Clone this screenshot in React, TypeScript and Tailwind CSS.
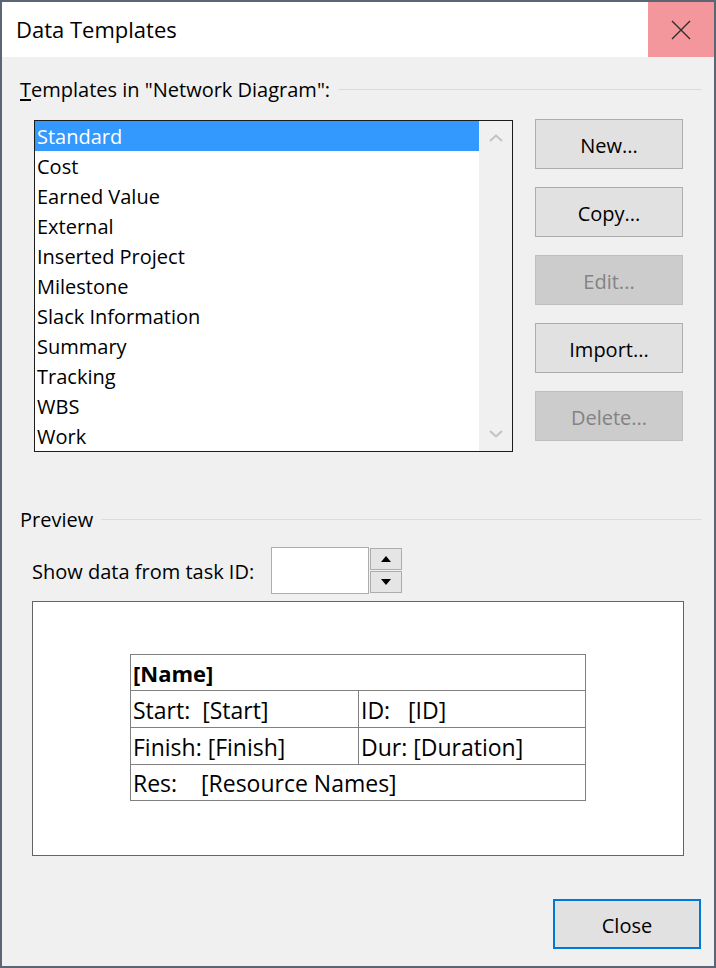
const templates = [
  "Standard",
  "Cost",
  "Earned Value",
  "External",
  "Inserted Project",
  "Milestone",
  "Slack Information",
  "Summary",
  "Tracking",
  "WBS",
  "Work",
];

const buttons = [
  { label: "New...", disabled: false },
  { label: "Copy...", disabled: false },
  { label: "Edit...", disabled: true },
  { label: "Import...", disabled: false },
  { label: "Delete...", disabled: true },
];

export default function App() {
  return (
    <div className="w-[716px] h-[968px] border-2 border-[#5b6573] bg-[#f0f0f0] flex flex-col font-['Open_Sans',sans-serif] text-[20px] text-black">
      {/* title bar */}
      <div className="h-[55px] bg-white flex shrink-0">
        <div className="flex-1 flex items-center pl-[14px] text-[22px]">Data Templates</div>
        <div className="w-[66px] bg-[#f4979c] flex items-center justify-center">
          <svg width="20" height="20" viewBox="0 0 20 20">
            <path d="M1 1 L19 19 M19 1 L1 19" stroke="#2b2b2b" strokeWidth="1.3" />
          </svg>
        </div>
      </div>

      <div className="flex-1 flex flex-col pl-[18px] pr-[12px]">
        <div className="mt-[19px] h-[26px] flex items-center">
          <span className="pt-[2px]">
            <span className="underline underline-offset-2">T</span>emplates in "Network Diagram":
          </span>
          <div className="flex-1 h-px bg-[#dcdcdc] ml-[8px]" />
        </div>

        <div className="flex items-start mt-[18px] ml-[14px]">
          <div className="w-[479px] h-[332px] border border-[#1c1c1c] bg-white flex">
            <div className="w-[444px] flex flex-col">
              {templates.map((t, i) => (
                <div
                  key={t}
                  className={
                    i === 0
                      ? "h-[30px] flex items-center pl-[2px] pt-px bg-[#3399ff] text-white"
                      : "h-[30px] flex items-center pl-[2px] pt-px"
                  }
                >
                  {t}
                </div>
              ))}
            </div>
            <div className="w-[33px] bg-[#f0f0f0] flex flex-col justify-between items-center pt-[13px] pb-[13px]">
              <svg width="14" height="8" viewBox="0 0 14 8">
                <path d="M1 7 L7 1.5 L13 7" fill="none" stroke="#c2c2c2" strokeWidth="2" />
              </svg>
              <svg width="14" height="8" viewBox="0 0 14 8">
                <path d="M1 1 L7 6.5 L13 1" fill="none" stroke="#c2c2c2" strokeWidth="2" />
              </svg>
            </div>
          </div>

          <div className="ml-[22px] -mt-px flex flex-col gap-[18px]">
            {buttons.map((b) => (
              <div
                key={b.label}
                className={
                  b.disabled
                    ? "w-[148px] h-[50px] pt-[3px] border border-[#bfbfbf] bg-[#cccccc] text-[#838383] flex items-center justify-center"
                    : "w-[148px] h-[50px] pt-[3px] border border-[#adadad] bg-[#e1e1e1] flex items-center justify-center"
                }
              >
                {b.label}
              </div>
            ))}
          </div>
        </div>

        <div className="mt-[54px] h-[26px] flex items-center">
          <span className="pt-[2px]">Preview</span>
          <div className="flex-1 h-px bg-[#dcdcdc] ml-[8px]" />
        </div>

        <div className="mt-[15px] ml-[12px] flex items-center">
          <div className="w-[239px] pt-[2px]">Show data from task ID:</div>
          <div className="w-[98px] h-[47px] border border-[#adadad] bg-white" />
          <div className="ml-px flex flex-col gap-px">
            <div className="w-[32px] h-[22px] border border-[#adadad] bg-[#e5e5e5] flex items-center justify-center">
              <svg width="10" height="6" viewBox="0 0 10 6">
                <polygon points="5,0 10,6 0,6" fill="#000" />
              </svg>
            </div>
            <div className="w-[32px] h-[22px] border border-[#adadad] bg-[#e5e5e5] flex items-center justify-center">
              <svg width="10" height="6" viewBox="0 0 10 6">
                <polygon points="0,0 10,0 5,6" fill="#000" />
              </svg>
            </div>
          </div>
        </div>

        <div className="mt-[7px] ml-[12px] w-[652px] h-[255px] border border-[#646464] bg-white pl-[97px] pt-[52px]">
          <div className="w-[456px] border border-[#808080] text-[23px] leading-none">
            <div className="h-[36px] border-b border-[#808080] flex items-center pl-[2px] text-[22px] font-bold">[Name]</div>
            <div className="h-[37px] pt-[3px] border-b border-[#808080] flex">
              <div className="w-[228px] border-r border-[#808080] -mt-[3px] pt-[3px] flex items-center pl-[2px] whitespace-pre">Start:  [Start]</div>
              <div className="flex-1 flex items-center pl-[2px] whitespace-pre">ID:   [ID]</div>
            </div>
            <div className="h-[37px] pt-[3px] border-b border-[#808080] flex">
              <div className="w-[228px] border-r border-[#808080] -mt-[3px] pt-[3px] flex items-center pl-[2px] whitespace-pre">Finish: [Finish]</div>
              <div className="flex-1 flex items-center pl-[2px] whitespace-pre">Dur: [Duration]</div>
            </div>
            <div className="h-[35px] pt-[2px] flex items-center pl-[2px] whitespace-pre">Res:    [Resource Names]</div>
          </div>
        </div>

        <div className="mt-auto mb-[17px] self-end mr-px w-[148px] h-[50px] pt-[3px] border-2 border-[#0078d7] bg-[#e1e1e1] flex items-center justify-center">
          Close
        </div>
      </div>
    </div>
  );
}
